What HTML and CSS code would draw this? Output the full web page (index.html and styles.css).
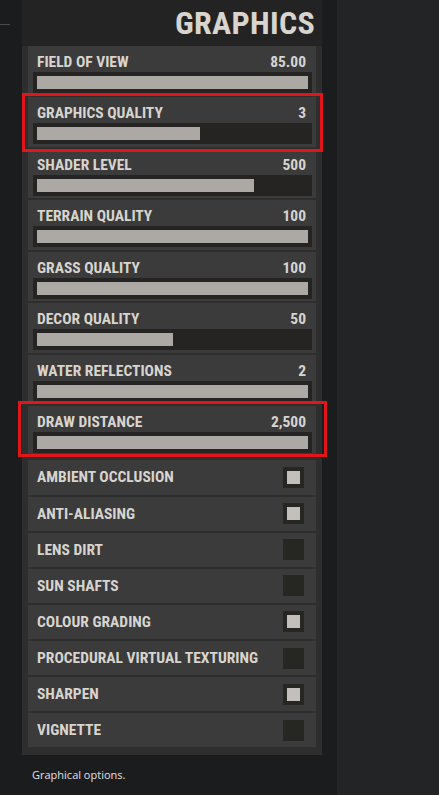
FILE: index.html
```html
<!DOCTYPE html>
<html>
<head>
<meta charset="utf-8">
<link rel="stylesheet" href="styles.css">
</head>
<body>
<div class="page">
  <div class="main">
    <div class="gutter"><div class="tick"></div></div>
    <div class="column">
      <div class="panel">
        <div class="title">GRAPHICS</div>
        <div class="list">
          <div class="slider"><div class="row"><span>FIELD OF VIEW</span><span>85.00</span></div><div class="track"><div class="fill" style="width:100%"></div></div></div>
          <div class="slider"><div class="row"><span>GRAPHICS QUALITY</span><span>3</span></div><div class="track"><div class="fill" style="width:60%"></div></div></div>
          <div class="slider"><div class="row"><span>SHADER LEVEL</span><span>500</span></div><div class="track"><div class="fill" style="width:80%"></div></div></div>
          <div class="slider"><div class="row"><span>TERRAIN QUALITY</span><span>100</span></div><div class="track"><div class="fill" style="width:100%"></div></div></div>
          <div class="slider"><div class="row"><span>GRASS QUALITY</span><span>100</span></div><div class="track"><div class="fill" style="width:100%"></div></div></div>
          <div class="slider"><div class="row"><span>DECOR QUALITY</span><span>50</span></div><div class="track"><div class="fill" style="width:50%"></div></div></div>
          <div class="slider"><div class="row"><span>WATER REFLECTIONS</span><span>2</span></div><div class="track"><div class="fill" style="width:100%"></div></div></div>
          <div class="slider"><div class="row"><span>DRAW DISTANCE</span><span>2,500</span></div><div class="track"><div class="fill" style="width:100%"></div></div></div>
          <div class="toggles">
            <div class="toggle"><span>AMBIENT OCCLUSION</span><div class="box on"></div></div>
            <div class="toggle"><span>ANTI-ALIASING</span><div class="box on"></div></div>
            <div class="toggle"><span>LENS DIRT</span><div class="box"></div></div>
            <div class="toggle"><span>SUN SHAFTS</span><div class="box"></div></div>
            <div class="toggle"><span>COLOUR GRADING</span><div class="box on"></div></div>
            <div class="toggle"><span>PROCEDURAL VIRTUAL TEXTURING</span><div class="box"></div></div>
            <div class="toggle"><span>SHARPEN</span><div class="box on"></div></div>
            <div class="toggle"><span>VIGNETTE</span><div class="box"></div></div>
          </div>
        </div>
        <div class="mark mark-quality"></div>
        <div class="mark mark-distance"></div>
      </div>
      <p class="caption">Graphical options.</p>
    </div>
  </div>
  <div class="side"></div>
</div>
</body>
</html>
```
FILE: styles.css
```css
html, body {
  margin: 0;
  padding: 0;
  background: #1b1c1e;
}
.page {
  display: flex;
  width: 439px;
  height: 795px;
}
.main {
  display: flex;
  width: 337px;
  background: #1b1c1e;
}
.gutter {
  width: 22px;
}
.tick {
  width: 10px;
  height: 1px;
  margin-top: 24px;
  background: #4a4b4d;
}
.column {
  width: 300px;
}
.panel {
  position: relative;
  background: #232323;
}
.title {
  font-family: Roboto, "Liberation Sans", sans-serif;
  font-weight: 700;
  font-stretch: 75%;
  font-size: 32px;
  letter-spacing: 0.3px;
  line-height: 46px;
  height: 46px;
  text-align: right;
  padding-right: 7px;
  color: #d8d4ce;
}
.list {
  background: #2e2e2e;
  padding: 0 6px 8px 6px;
}
.slider {
  box-sizing: border-box;
  height: 49.43px;
  margin-bottom: 2px;
  background: #3b3b3b;
  padding: 7px 4px 0 5px;
}
.row, .toggle {
  font-family: Roboto, "Liberation Sans", sans-serif;
  font-weight: 700;
  font-stretch: 75%;
  font-size: 15.5px;
  color: #d8d4ce;
}
.row {
  display: flex;
  justify-content: space-between;
  line-height: 18px;
  padding: 0 6px 0 4px;
}
.track {
  margin-top: 1px;
  height: 21px;
  box-sizing: border-box;
  padding: 4px;
  background: #252422;
}
.fill {
  height: 13px;
  background: #aca8a3;
}
.toggles {
  padding-top: 3px;
}
.toggle {
  box-sizing: border-box;
  height: 34.14px;
  margin-bottom: 2px;
  background: #3b3b3b;
  display: flex;
  align-items: center;
  justify-content: space-between;
  padding: 0 12px 0 9px;
}
.toggle:last-child {
  margin-bottom: 0;
}
.box {
  width: 21px;
  height: 21px;
  box-sizing: border-box;
  padding: 4px;
  background: #262622;
}
.box.on::after {
  content: "";
  display: block;
  width: 13px;
  height: 13px;
  background: #c3bfba;
}
.mark {
  position: absolute;
  border: 3px solid #e0161a;
  box-sizing: border-box;
}
.mark-quality {
  left: 0;
  top: 93px;
  width: 301px;
  height: 59px;
}
.mark-distance {
  left: -4px;
  top: 401px;
  width: 309px;
  height: 56px;
}
.caption {
  margin: 12px 0 0 10px;
  font-family: "Open Sans", sans-serif;
  font-size: 11px;
  color: #e2e2e2;
}
.side {
  flex: 1;
  background: #232426;
}
```
